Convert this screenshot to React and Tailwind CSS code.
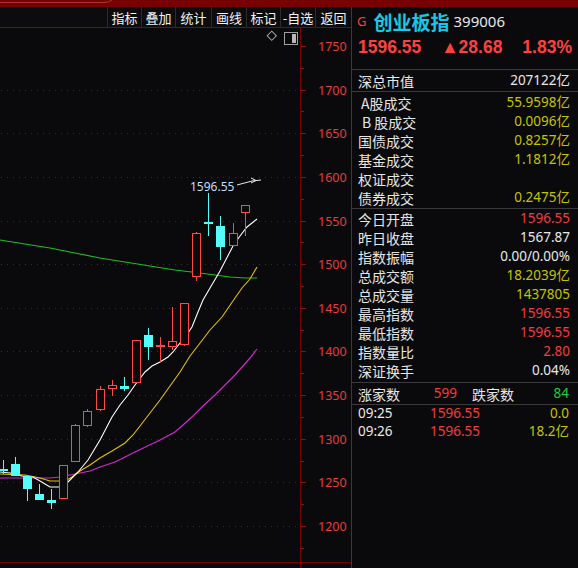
import React from "react";

const CJK = '"Noto Sans CJK SC", "Noto Sans", sans-serif';
const NUM = '"Noto Sans", "Noto Sans CJK SC", sans-serif';

const Y = (p) => 46 + (1750 - p) * 0.8727;
const LABELS = [1750, 1700, 1650, 1600, 1550, 1500, 1450, 1400, 1350, 1300, 1250, 1200];

// [left, bodyTop, bodyBottom, wickTop, wickBottom, up]
const CANDLES = [
  [-1, 469, 470, 460, 474, false],
  [11, 464, 476, 457, 476, false],
  [23, 476, 489, 476, 501, false],
  [35, 494, 500, 484, 500, false],
  [47, 500, 503, 489, 509, false],
  [59, 465, 499, 465, 499, true],
  [71, 425, 462, 424, 462, true],
  [83, 411, 426, 409, 427, true],
  [96, 389, 410, 386, 411, true],
  [108, 385, 389, 380, 396, true],
  [120, 386, 389, 377, 391, false],
  [132, 340, 383, 340, 383, true],
  [144, 335, 347, 328, 360, false],
  [156, 345, 347, 337, 362, "doji"],
  [168, 341, 347, 307, 350, true],
  [180, 303, 345, 303, 346, true],
  [192, 233, 277, 232, 281, true],
  [204, 222, 224, 193, 236, false],
  [216, 226, 247, 216, 260, false],
  [229, 233, 246, 223, 246, true],
  [241, 205, 213, 205, 236, true],
];

const pts = (a) => a.map((p) => p.join(",")).join(" ");

const MA_WHITE = [
  [0, 472], [10, 473], [22, 476], [33, 477], [40, 481], [50, 487], [58, 487], [64, 486],
  [70, 480], [78, 472], [88, 460], [100, 440], [112, 417], [120, 405], [128, 395], [135, 385],
  [145, 372], [152, 366], [160, 362], [168, 357], [173, 352], [180, 343], [186, 336],
  [192, 327], [198, 312], [203, 300], [210, 288], [220, 271], [233, 246], [240, 236],
  [247, 227], [252, 223], [257, 219],
];
const MA_YELLOW = [
  [0, 474], [25, 475], [40, 478], [50, 481], [65, 481], [72, 477], [80, 471], [90, 465],
  [100, 458], [112, 451], [125, 443], [133, 435], [140, 426], [160, 400], [180, 372],
  [190, 356], [197, 347], [210, 330], [222, 317], [235, 298], [242, 288], [250, 279], [257, 267],
];
const MA_PURPLE = [
  [0, 478], [50, 478], [60, 477], [70, 475], [90, 471], [100, 467], [115, 462], [125, 457],
  [135, 452], [160, 440], [175, 432], [183, 425], [193, 416], [203, 406], [215, 395],
  [225, 385], [235, 375], [243, 366], [250, 358], [257, 349],
];
const MA_GREEN = [
  [0, 240], [25, 244], [50, 248], [75, 253], [100, 258], [125, 262], [150, 266],
  [175, 270], [200, 273], [215, 275], [230, 277], [245, 278], [257, 278],
];

function Chart() {
  const red = "#ff4848";
  const cyan = "#54fcfc";
  return (
    <svg width="351" height="540" viewBox="0 28 351 540" className="block">
      {LABELS.slice(1).map((p) => (
        <line key={"g" + p} x1="1" x2="299" y1={Y(p) + 0.5} y2={Y(p) + 0.5}
          stroke="#8a0c0c" strokeWidth="1" strokeDasharray="1 5" shapeRendering="crispEdges" />
      ))}
      <line x1="300.5" x2="300.5" y1="28" y2="568" stroke="#7a0000" shapeRendering="crispEdges" />
      <line x1="0" x2="351" y1="562.5" y2="562.5" stroke="#7a0000" shapeRendering="crispEdges" />
      {LABELS.map((p) => (
        <g key={"t" + p}>
          <line x1="301" x2="306" y1={Y(p) + 0.5} y2={Y(p) + 0.5} stroke="#9a0a0a" shapeRendering="crispEdges" />
          <line x1="301" x2="304" y1={Y(p) + 22.3} y2={Y(p) + 22.3} stroke="#9a0a0a" shapeRendering="crispEdges" />
          <text x="318" y={Y(p) + 5} fill="#e83a3a" fontSize="12.5" fontFamily={NUM}>{p}</text>
        </g>
      ))}
      <polyline points={pts(MA_GREEN)} fill="none" stroke="#1cc01c" strokeWidth="1.2" />
      <polyline points={pts(MA_PURPLE)} fill="none" stroke="#d028d0" strokeWidth="1.2" />
      <polyline points={pts(MA_YELLOW)} fill="none" stroke="#e0c400" strokeWidth="1.1" />
      <polyline points={pts(MA_WHITE)} fill="none" stroke="#ffffff" strokeWidth="1.1" />
      {CANDLES.map(([l, t, b, wt, wb, up], i) => {
        const cx = l + 4.5;
        if (up === true) {
          return (
            <g key={i} shapeRendering="crispEdges">
              <line x1={cx} x2={cx} y1={wt} y2={wb} stroke={red} />
              <rect x={l + 0.5} y={t + 0.5} width="8" height={Math.max(b - t - 1, 1)} fill="#0a0a0c" stroke={red} />
            </g>
          );
        }
        const col = up === "doji" ? red : cyan;
        return (
          <g key={i} shapeRendering="crispEdges">
            <line x1={cx} x2={cx} y1={wt} y2={wb} stroke={col} />
            <rect x={l} y={t} width="9" height={Math.max(b - t, 2)} fill={col} />
          </g>
        );
      })}
      <text x="190" y="191" fill="#c4dcf8" fontSize="12" fontFamily={NUM}>1596.55</text>
      <polyline points="237,185 252,181 261,180" fill="none" stroke="#e8e8e8" strokeWidth="1" />
      <polyline points="251,178 256,180.5 251,183" fill="none" stroke="#e8e8e8" strokeWidth="1" />
      <rect x="268.5" y="32.5" width="6.5" height="6.5" fill="none" stroke="#a8a8a8" transform="rotate(45 271.75 35.75)" />
      <rect x="284.5" y="32.5" width="13" height="12" fill="none" stroke="#a0a0a0" shapeRendering="crispEdges" />
      <rect x="292" y="34" width="4" height="9" fill="#b8b8b8" shapeRendering="crispEdges" />
    </svg>
  );
}

const TOOLS = [
  ["指标", "w-[34px]"],
  ["叠加", "w-[34px]"],
  ["统计", "w-[36px]"],
  ["画线", "w-[35px]"],
  ["标记", "w-[34px]"],
  ["-自选", "w-[35px]"],
  ["返回", "w-[36px]"],
];

function Row({ label, value, color = "text-[#e8e8e8]", h = "h-[19px]", labelClass = "" }) {
  return (
    <div className={`flex ${h} items-center justify-between pl-[6px] pr-[8px] leading-none`}>
      <span className={`text-[14px] text-[#e6e6e6] ${labelClass}`} style={{ fontFamily: CJK }}>{label}</span>
      <span className={`text-[13.5px] ${color}`} style={{ fontFamily: NUM }}>{value}</span>
    </div>
  );
}

const YEL = "text-[#c2c400]";
const RED = "text-[#f23c3c]";
const WHT = "text-[#e8e8e8]";

export default function App() {
  return (
    <div className="flex h-[568px] w-[578px] flex-col overflow-hidden bg-[#0a0a0c]" style={{ fontFamily: CJK }}>
      <div className="relative h-[7px] shrink-0 bg-[#780000]">
        <svg width="578" height="7" className="absolute left-0 top-0">
          <path d="M0 2.5 H104 Q109 2.5 112 0" fill="none" stroke="#a23838" strokeWidth="1" />
        </svg>
      </div>
      <div className="flex min-h-0 flex-1">
        <div className="flex w-[351px] shrink-0 flex-col">
          <div className="flex h-[21px] shrink-0 justify-end border-b border-[#2c2c2e] bg-[#0c0c0e]">
            {TOOLS.map(([t, w]) => (
              <div key={t} className={`flex ${w} items-center justify-center border-l border-[#2c2c2e] text-[13px] leading-none text-[#f2f2f2]`}>
                {t}
              </div>
            ))}
          </div>
          <div className="min-h-0 flex-1">
            <Chart />
          </div>
        </div>
        <div className="flex w-[227px] shrink-0 flex-col border-l border-[#3a3a3c]">
          <div className="border-b border-[#3a3a3c]">
            <div className="flex h-[28px] items-center pl-[5px] leading-none">
              <span className="text-[13px] text-[#ff3a3a]" style={{ fontFamily: NUM }}>G</span>
              <span className="ml-[7px] text-[19px] font-bold text-[#18c8e8]">创业板指</span>
              <span className="ml-[4px] text-[15px] text-[#e8e8e8]" style={{ fontFamily: NUM }}>399006</span>
            </div>
            <div className="flex h-[26px] items-center justify-between pl-[6px] pr-[6px] text-[17.5px] font-bold leading-none text-[#ff4040]" style={{ fontFamily: '"Liberation Sans", Arial, sans-serif' }}>
              <span>1596.55</span>
              <span>▲28.68</span>
              <span>1.83%</span>
            </div>
            <div className="h-[8px]" />
          </div>
          <div className="border-b border-[#3a3a3c]">
            <Row label="深总市值" value="207122亿" color={WHT} h="h-[21px]" />
          </div>
          <div className="border-b border-[#3a3a3c] pb-[1px] pt-[1px]">
            <Row label="A股成交" value="55.9598亿" color={YEL} labelClass="pl-[3px]" />
            <Row label="B 股成交" value="0.0096亿" color={YEL} labelClass="pl-[4px]" />
            <Row label="国债成交" value="0.8257亿" color={YEL} />
            <Row label="基金成交" value="1.1812亿" color={YEL} />
            <Row label="权证成交" value="" color={YEL} />
            <Row label="债券成交" value="0.2475亿" color={YEL} />
          </div>
          <div className="border-b border-[#3a3a3c] pb-[2px]">
            <Row label="今日开盘" value="1596.55" color={RED} />
            <Row label="昨日收盘" value="1567.87" color={WHT} />
            <Row label="指数振幅" value="0.00/0.00%" color={WHT} />
            <Row label="总成交额" value="18.2039亿" color={YEL} />
            <Row label="总成交量" value="1437805" color={YEL} />
            <Row label="最高指数" value="1596.55" color={RED} />
            <Row label="最低指数" value="1596.55" color={RED} />
            <Row label="指数量比" value="2.80" color={RED} />
            <Row label="深证换手" value="0.04%" color={WHT} />
          </div>
          <div className="grid h-[22px] grid-cols-2 border-b border-[#3a3a3c] leading-none">
            <div className="flex items-center justify-between pl-[6px] pr-[8px]">
              <span className="text-[14px] text-[#e6e6e6]">涨家数</span>
              <span className={`text-[13.5px] ${RED}`} style={{ fontFamily: NUM }}>599</span>
            </div>
            <div className="flex items-center justify-between pl-[7px] pr-[9px]">
              <span className="text-[14px] text-[#e6e6e6]">跌家数</span>
              <span className="text-[13.5px] text-[#1ccc3c]" style={{ fontFamily: NUM }}>84</span>
            </div>
          </div>
          <div className="leading-none" style={{ fontFamily: NUM }}>
            {[
              ["09:25", "1596.55", "0.0"],
              ["09:26", "1596.55", "18.2亿"],
            ].map(([t, p, v]) => (
              <div key={t} className="flex h-[18px] items-center pl-[6px] pr-[9px] text-[13.5px]">
                <span className="w-[72px] text-[#e8e8e8]">{t}</span>
                <span className={`w-[52px] ${RED}`}>{p}</span>
                <span className={`flex-1 text-right ${YEL}`}>{v}</span>
              </div>
            ))}
          </div>
        </div>
      </div>
    </div>
  );
}
